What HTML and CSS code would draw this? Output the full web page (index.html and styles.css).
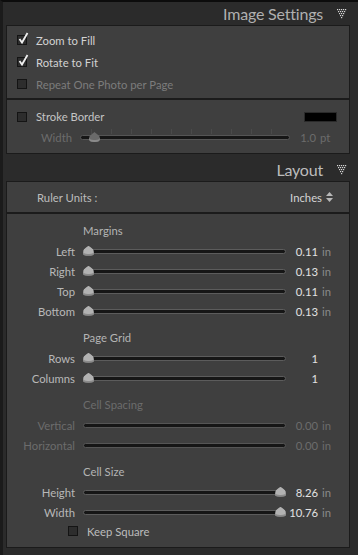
FILE: index.html
```html
<!DOCTYPE html>
<html lang="en">
<head>
    <meta charset="UTF-8">
    <title>Print - Image Settings / Layout</title>
    <link rel="stylesheet" href="styles.css">
</head>
<body>
    <div class="sidebar">
        <!-- Image Settings -->
        <div class="panel-header">
            <span>Image Settings</span>
            <svg class="collapse" width="10" height="10" viewBox="0 0 10 10">
                <g fill="#d4d4d4">
                    <rect x="0" y="0" width="1.2" height="1.2"/><rect x="2" y="0" width="1.2" height="1.2"/><rect x="4" y="0" width="1.2" height="1.2"/><rect x="6" y="0" width="1.2" height="1.2"/><rect x="8" y="0" width="1.2" height="1.2"/>
                    <rect x="1" y="2" width="1.2" height="1.2"/><rect x="3" y="2" width="1.2" height="1.2"/><rect x="5" y="2" width="1.2" height="1.2"/><rect x="7" y="2" width="1.2" height="1.2"/>
                    <rect x="2" y="4" width="1.2" height="1.2"/><rect x="4" y="4" width="1.2" height="1.2"/><rect x="6" y="4" width="1.2" height="1.2"/>
                    <rect x="3" y="6" width="1.2" height="1.2"/><rect x="5" y="6" width="1.2" height="1.2"/>
                    <rect x="4" y="8" width="1.2" height="1.2"/>
                </g>
            </svg>
        </div>

        <div class="box box-options">
            <div class="check-row">
                <span class="checkbox"><svg class="tick" width="13" height="14" viewBox="0 0 13 14"><path d="M2.5 8 L5 11.5 L10.5 2" /></svg></span>
                Zoom to Fill
            </div>
            <div class="check-row">
                <span class="checkbox"><svg class="tick" width="13" height="14" viewBox="0 0 13 14"><path d="M2.5 8 L5 11.5 L10.5 2" /></svg></span>
                Rotate to Fit
            </div>
            <div class="check-row dim">
                <span class="checkbox"></span>
                Repeat One Photo per Page
            </div>
        </div>

        <div class="box box-stroke">
            <div class="check-row">
                <span class="checkbox"></span>
                Stroke Border
                <span class="swatch"></span>
            </div>
            <div class="slider-row compact dim">
                <span class="label">Width</span>
                <div class="track ticks"><span class="thumb" style="--pos: 0.045"></span></div>
                <span class="value">1.0</span>
                <span class="unit">pt</span>
            </div>
        </div>

        <!-- Layout -->
        <div class="panel-header layout">
            <span>Layout</span>
            <svg class="collapse" width="10" height="10" viewBox="0 0 10 10">
                <g fill="#d4d4d4">
                    <rect x="0" y="0" width="1.2" height="1.2"/><rect x="2" y="0" width="1.2" height="1.2"/><rect x="4" y="0" width="1.2" height="1.2"/><rect x="6" y="0" width="1.2" height="1.2"/><rect x="8" y="0" width="1.2" height="1.2"/>
                    <rect x="1" y="2" width="1.2" height="1.2"/><rect x="3" y="2" width="1.2" height="1.2"/><rect x="5" y="2" width="1.2" height="1.2"/><rect x="7" y="2" width="1.2" height="1.2"/>
                    <rect x="2" y="4" width="1.2" height="1.2"/><rect x="4" y="4" width="1.2" height="1.2"/><rect x="6" y="4" width="1.2" height="1.2"/>
                    <rect x="3" y="6" width="1.2" height="1.2"/><rect x="5" y="6" width="1.2" height="1.2"/>
                    <rect x="4" y="8" width="1.2" height="1.2"/>
                </g>
            </svg>
        </div>

        <div class="box box-ruler">
            <span>Ruler Units :</span>
            <span class="units-select">
                Inches
                <svg width="7" height="10" viewBox="0 0 7 10"><path d="M3.5 0 L7 4 L0 4 Z M0 6 L7 6 L3.5 10 Z" fill="#b8b8b8"/></svg>
            </span>
        </div>

        <div class="box box-layout">
            <div class="group">
                <div class="group-title">Margins</div>
                <div class="slider-row">
                    <span class="label">Left</span>
                    <div class="track"><span class="thumb" style="--pos: 0"></span></div>
                    <span class="value">0.11</span><span class="unit">in</span>
                </div>
                <div class="slider-row">
                    <span class="label">Right</span>
                    <div class="track"><span class="thumb" style="--pos: 0"></span></div>
                    <span class="value">0.13</span><span class="unit">in</span>
                </div>
                <div class="slider-row">
                    <span class="label">Top</span>
                    <div class="track"><span class="thumb" style="--pos: 0"></span></div>
                    <span class="value">0.11</span><span class="unit">in</span>
                </div>
                <div class="slider-row">
                    <span class="label">Bottom</span>
                    <div class="track"><span class="thumb" style="--pos: 0"></span></div>
                    <span class="value">0.13</span><span class="unit">in</span>
                </div>
            </div>

            <div class="group">
                <div class="group-title">Page Grid</div>
                <div class="slider-row">
                    <span class="label">Rows</span>
                    <div class="track"><span class="thumb" style="--pos: 0"></span></div>
                    <span class="value">1</span><span class="unit"></span>
                </div>
                <div class="slider-row">
                    <span class="label">Columns</span>
                    <div class="track"><span class="thumb" style="--pos: 0"></span></div>
                    <span class="value">1</span><span class="unit"></span>
                </div>
            </div>

            <div class="group dim">
                <div class="group-title">Cell Spacing</div>
                <div class="slider-row">
                    <span class="label">Vertical</span>
                    <div class="track"></div>
                    <span class="value">0.00</span><span class="unit">in</span>
                </div>
                <div class="slider-row">
                    <span class="label">Horizontal</span>
                    <div class="track"></div>
                    <span class="value">0.00</span><span class="unit">in</span>
                </div>
            </div>

            <div class="group">
                <div class="group-title">Cell Size</div>
                <div class="slider-row">
                    <span class="label">Height</span>
                    <div class="track"><span class="thumb" style="--pos: 1"></span></div>
                    <span class="value">8.26</span><span class="unit">in</span>
                </div>
                <div class="slider-row">
                    <span class="label">Width</span>
                    <div class="track"><span class="thumb" style="--pos: 1"></span></div>
                    <span class="value">10.76</span><span class="unit">in</span>
                </div>
                <div class="check-row keep-square">
                    <span class="checkbox"></span>
                    Keep Square
                </div>
            </div>
        </div>
    </div>
</body>
</html>
```

FILE: styles.css
```css
* {
    box-sizing: border-box;
}
body {
    margin: 0;
    width: 358px;
    height: 555px;
    overflow: hidden;
    background: #2b2b2b;
    border-top: 2px solid #0c0c0c;
    border-left: 3px solid #1b1b1b;
    font-family: Lato, "Open Sans", sans-serif;
    font-size: 11.3px;
    color: #c8c8c8;
}
.sidebar {
    margin: 0 8px 0 3px;
}

/* panel headers */
.panel-header {
    display: flex;
    justify-content: flex-end;
    align-items: center;
    gap: 14px;
    height: 23px;
    padding-right: 3px;
    font-size: 16px;
    letter-spacing: -0.2px;
    color: #b0b0b0;
}
.panel-header.layout {
    height: 27px;
    padding-top: 4px;
    color: #bcbcbc;
}
.collapse {
    flex: none;
}

/* boxes */
.box {
    background: #3f3f3f;
    border: 1px solid #1b1b1b;
}
.box-options {
    padding: 3px 0;
}
.box-stroke {
    padding: 6px 0 5px;
}
.box-ruler {
    display: flex;
    justify-content: space-between;
    align-items: center;
    height: 32px;
    padding: 0 16px 0 30px;
    color: #bcbcbc;
}
.units-select {
    display: flex;
    align-items: center;
    gap: 4px;
    color: #d4d4d4;
}
.box-layout {
    padding: 6px 0 7px;
}

/* checkboxes */
.check-row {
    display: flex;
    align-items: center;
    gap: 9px;
    height: 22px;
    padding-left: 10px;
    color: #d2d2d2;
}
.box-stroke .check-row {
    height: 21px;
    color: #c4c4c4;
}
.check-row.dim {
    color: #7c7c7c;
}
.checkbox {
    position: relative;
    flex: none;
    width: 10px;
    height: 10px;
    background: #2d2d2d;
    border: 1px solid #141414;
}
.tick {
    position: absolute;
    left: -1px;
    top: -5px;
    overflow: visible;
}
.tick path {
    fill: none;
    stroke: #eeeeee;
    stroke-width: 1.8;
}
.swatch {
    margin-left: auto;
    margin-right: 12px;
    width: 33px;
    height: 10px;
    background: #000;
    border: 1px solid #2a2a2a;
}
.keep-square {
    height: 18px;
    padding-left: 61px;
    color: #bcbcbc;
}

/* sliders */
.group + .group {
    margin-top: 6px;
}
.group-title {
    height: 21px;
    line-height: 21px;
    padding-left: 76px;
    color: #b4b4b4;
}
.slider-row {
    display: grid;
    grid-template-columns: 76px 203px 32px auto;
    align-items: center;
    height: 20px;
}
.slider-row.compact {
    grid-template-columns: 73px 210px 26px auto;
    height: 21px;
}
.slider-row .label {
    text-align: right;
    padding-right: 8px;
    color: #b8b8b8;
}
.slider-row .value {
    text-align: right;
    color: #e2e2e2;
}
.slider-row .unit {
    padding-left: 4px;
    color: #8a8a8a;
}
.dim .group-title,
.dim .label,
.dim .value,
.dim .unit,
.slider-row.dim .label,
.slider-row.dim .value,
.slider-row.dim .unit {
    color: #6c6c6c;
}
.track {
    position: relative;
    height: 5px;
    background: #161616;
    border: 1px solid #5c5c5c;
    border-radius: 3px;
}
.dim .track {
    border-color: #555;
}
.track.ticks::before {
    content: "";
    position: absolute;
    left: 10px;
    right: 10px;
    top: -7px;
    height: 5px;
    background: repeating-linear-gradient(to right, #4a4a4a 0 1px, transparent 1px 20px);
}
.thumb {
    position: absolute;
    top: -4px;
    left: calc(var(--pos) * (100% - 9px) - 1px);
    width: 11px;
    height: 10px;
    background: #b2b2b2;
    border-radius: 50% 50% 45% 45% / 70% 70% 30% 30%;
    clip-path: polygon(50% 0, 100% 45%, 100% 100%, 0 100%, 0 45%);
    box-shadow: inset 0 -2px 0 #8a8a8a;
}
.dim .thumb {
    background: #6a6a6a;
}
```
